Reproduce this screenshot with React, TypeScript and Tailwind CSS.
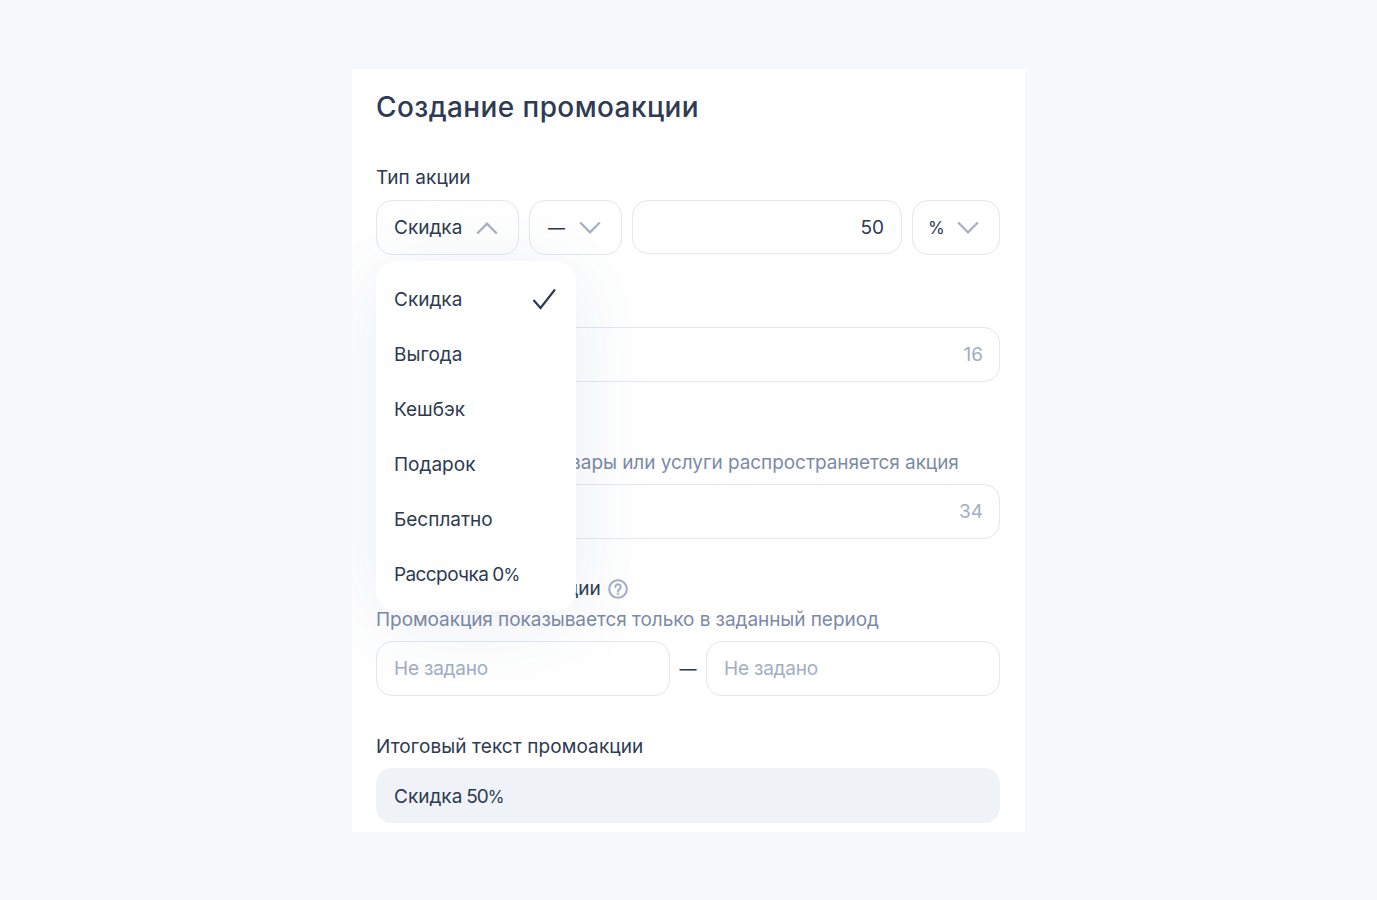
import React from 'react';

const font = "font-['Inter','Noto_Sans',sans-serif]";

const options = ['Скидка', 'Выгода', 'Кешбэк', 'Подарок', 'Бесплатно'];

function Chevron({ up }: { up?: boolean }) {
  return (
    <svg viewBox="0 0 22 14" className="h-[14px] w-[22px] shrink-0" fill="none" stroke="#a8b0c8" strokeWidth="2.3">
      <path d={up ? 'M1.2 12.5 11 2.7l9.8 9.8' : 'M1.2 1.5 11 11.3l9.8-9.8'} />
    </svg>
  );
}

function Select({ value, open, className }: { value: React.ReactNode; open?: boolean; className: string }) {
  return (
    <div className={`flex h-[55px] items-center justify-between rounded-[16px] border border-[#e4e6f1] bg-white pl-[17px] pr-[20px] ${className}`}>
      <span>{value}</span>
      <Chevron up={open} />
    </div>
  );
}

function Field({ placeholder, counter, className }: { placeholder?: string; counter?: string; className?: string }) {
  return (
    <div className={`flex h-[55px] items-center justify-between rounded-[16px] border border-[#e4e6f1] bg-white pl-[17px] pr-[16px] text-[#a3adc4] ${className ?? ''}`}>
      <span className="tracking-[-0.2px]">{placeholder}</span>
      <span>{counter}</span>
    </div>
  );
}

export default function App() {
  return (
    <div className={`flex min-h-[900px] justify-center bg-[#f6f9fc] pt-[69px] text-[19px] leading-[24px] text-[#2d3a52] ${font}`}>
      <div className="relative h-[763px] w-[673px] overflow-hidden bg-white pl-[24px] pr-[25px]">
        <h1 className="mt-[20px] text-[28px] font-medium leading-[36px] tracking-[0.4px] text-[#2f3b54]">Создание промоакции</h1>

        <div className="mt-[41px] tracking-[0.1px]">Тип акции</div>
        <div className="mt-[10px] flex gap-[10px]">
          <Select value="Скидка" open className="w-[143px]" />
          <Select value={<span className="ml-px text-[17px] font-medium">—</span>} className="w-[93px]" />
          <div className="flex h-[54px] w-[270px] items-center justify-end rounded-[16px] border border-[#e4e6f1] bg-white px-[17px] pt-px">50</div>
          <Select value={<span className="-ml-[2px] text-[17px]">%</span>} className="w-[88px]" />
        </div>

        <div className="mt-[37px] tracking-[0.1px]">Заголовок</div>
        <Field counter="16" className="mt-[11px]" />

        <div className="mt-[38px] tracking-[0.1px]">Описание</div>
        <div className="mt-[7px] tracking-[-0.06px] text-[#7d8aa6]">Укажите, на какие товары или услуги распространяется акция</div>
        <Field counter="34" className="mt-[9px]" />

        <div className="mt-[38px] flex items-center gap-[7px]">
          <span>Срок проведения акции</span>
          <svg viewBox="0 0 20 20" className="h-[20px] w-[20px]" fill="none" stroke="#a3adc4" strokeWidth="2">
            <circle cx="10" cy="10" r="8.8" />
            <path d="M7.3 8a2.7 2.7 0 1 1 4.1 2.3c-.9.6-1.4 1-1.4 2" strokeLinecap="round" />
            <circle cx="10" cy="14.9" r="0.4" />
          </svg>
        </div>
        <div className="mt-[7px] tracking-[-0.06px] text-[#7d8aa6]">Промоакция показывается только в заданный период</div>
        <div className="mt-[9px] flex items-center">
          <Field placeholder="Не задано" className="w-[294px]" />
          <span className="w-[36px] text-center text-[17px] font-medium">—</span>
          <Field placeholder="Не задано" className="w-[294px]" />
        </div>

        <div className="mt-[39px] tracking-[0.1px]">Итоговый текст промоакции</div>
        <div className="mt-[9px] flex h-[55px] items-center rounded-[16px] bg-[#eff2f7] pl-[18px] pr-[17px] pt-[2px]">
          Скидка <span className="ml-[4px] tracking-[-1px]">50<span className="text-[17px]">%</span></span>
        </div>

        {/* Dropdown menu */}
        <div className="absolute left-[24px] top-[192px] w-[200px] rounded-[20px] bg-white py-[10px] shadow-[0_10px_80px_rgba(60,80,130,0.10)]">
          {options.map((o, i) => (
            <div key={o} className="flex h-[55px] items-center justify-between pl-[18px] pr-[20px] pt-[2px]">
              <span>{o}</span>
              {i === 0 && (
                <svg viewBox="0 0 24 22" className="-mt-[2px] h-[22px] w-[24px]" fill="none" stroke="#2d3a52" strokeWidth="2.1">
                  <path d="M1.5 12 8.5 20 23 1.5" />
                </svg>
              )}
            </div>
          ))}
          <div className="flex h-[55px] items-center pl-[18px] pt-[2px]">
            <span className="tracking-[-0.6px]">Рассрочка</span>
            <span className="ml-[4px] tracking-[-0.9px]">0<span className="text-[17px]">%</span></span>
          </div>
        </div>
      </div>
    </div>
  );
}
